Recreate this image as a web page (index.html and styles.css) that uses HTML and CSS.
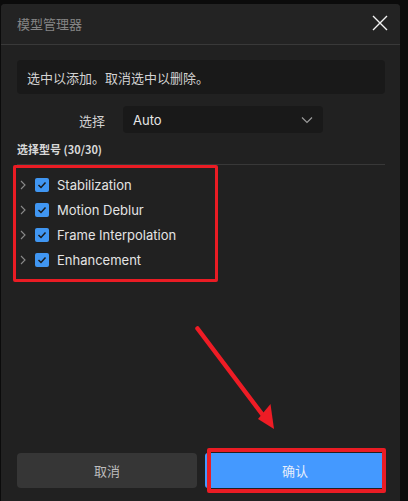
FILE: index.html
```html
<!DOCTYPE html>
<html lang="zh">
<head>
<meta charset="utf-8">
<link rel="stylesheet" href="styles.css">
</head>
<body>
<div class="dialog">
  <div class="header">
    <span class="title">模型管理器</span>
    <svg class="close" width="16" height="16" viewBox="0 0 16 16"><path d="M1 1L15 15M15 1L1 15" stroke="#f2f2f2" stroke-width="1.4" fill="none"/></svg>
  </div>
  <div class="content">
    <div class="info">选中以添加。取消选中以删除。</div>
    <div class="select-row">
      <span class="label">选择</span>
      <div class="select">
        <span>Auto</span>
        <svg width="12" height="8" viewBox="0 0 12 8"><path d="M1 1.5L6 6.5L11 1.5" stroke="#9a9a9a" stroke-width="1.2" fill="none"/></svg>
      </div>
    </div>
    <div class="section-title">选择型号 (30/30)</div>
    <div class="tree">
      <div class="row"><svg class="caret" width="6" height="10" viewBox="0 0 6 10"><path d="M1 1L5 5L1 9" stroke="#8a8a8a" stroke-width="1.1" fill="none"/></svg><span class="check"><svg width="10" height="8" viewBox="0 0 10 8"><path d="M1.5 4L4 6.5L8.5 1.5" stroke="#1a1a1a" stroke-width="1.5" fill="none"/></svg></span><span class="name">Stabilization</span></div>
      <div class="row"><svg class="caret" width="6" height="10" viewBox="0 0 6 10"><path d="M1 1L5 5L1 9" stroke="#8a8a8a" stroke-width="1.1" fill="none"/></svg><span class="check"><svg width="10" height="8" viewBox="0 0 10 8"><path d="M1.5 4L4 6.5L8.5 1.5" stroke="#1a1a1a" stroke-width="1.5" fill="none"/></svg></span><span class="name">Motion Deblur</span></div>
      <div class="row"><svg class="caret" width="6" height="10" viewBox="0 0 6 10"><path d="M1 1L5 5L1 9" stroke="#8a8a8a" stroke-width="1.1" fill="none"/></svg><span class="check"><svg width="10" height="8" viewBox="0 0 10 8"><path d="M1.5 4L4 6.5L8.5 1.5" stroke="#1a1a1a" stroke-width="1.5" fill="none"/></svg></span><span class="name">Frame Interpolation</span></div>
      <div class="row"><svg class="caret" width="6" height="10" viewBox="0 0 6 10"><path d="M1 1L5 5L1 9" stroke="#8a8a8a" stroke-width="1.1" fill="none"/></svg><span class="check"><svg width="10" height="8" viewBox="0 0 10 8"><path d="M1.5 4L4 6.5L8.5 1.5" stroke="#1a1a1a" stroke-width="1.5" fill="none"/></svg></span><span class="name">Enhancement</span></div>
    </div>
    <div class="footer">
      <button class="btn cancel">取消</button>
      <button class="btn confirm">确认</button>
    </div>
  </div>
</div>
<div class="mark mark-list"></div>
<div class="mark mark-btn"></div>
<svg class="arrow" width="100" height="110" viewBox="0 0 100 110">
  <path d="M2.5 2.5L70 92" stroke="#ee1c25" stroke-width="4.5" stroke-linecap="round" fill="none"/>
  <path d="M63 93L75.5 78L79 103Z" fill="#ee1c25"/>
</svg>
</body>
</html>
```

FILE: styles.css
```css
html, body {
  margin: 0;
  padding: 0;
  background: #0b0b0b;
  width: 408px;
  height: 501px;
  overflow: hidden;
  font-family: "Inter", "Noto Sans CJK SC", sans-serif;
}
.dialog {
  position: relative;
  margin: 4px 0 0 1px;
  width: 399px;
  height: 497px;
  background: #212121;
  border-radius: 4px 4px 0 0;
  display: flex;
  flex-direction: column;
}
.header {
  height: 41px;
  box-sizing: border-box;
  border-bottom: 1px solid #393939;
  background: #232323;
  border-radius: 4px 4px 0 0;
  display: flex;
  align-items: center;
  justify-content: space-between;
  padding: 0 12px 0 16px;
}
.title {
  font-family: "Noto Sans CJK SC", sans-serif;
  font-size: 13px;
  color: #858585;
  margin-top: -1px;
}
.close {
  margin-top: -2px;
}
.content {
  flex: 1;
  display: flex;
  flex-direction: column;
  padding: 15px 15px 13px 16px;
}
.info {
  height: 34px;
  background: #191919;
  border-radius: 4px;
  display: flex;
  align-items: center;
  padding-left: 10px;
  font-family: "Noto Sans CJK SC", sans-serif;
  font-size: 13px;
  color: #d2d2d2;
}
.select-row {
  margin-top: 12px;
  height: 27px;
  display: flex;
  align-items: center;
  gap: 18px;
}
.label {
  width: 88px;
  text-align: right;
  font-family: "Noto Sans CJK SC", sans-serif;
  font-size: 13px;
  color: #d0d0d0;
  margin-top: 1px;
}
.select {
  width: 200px;
  height: 27px;
  box-sizing: border-box;
  background: #191919;
  border-radius: 4px;
  display: flex;
  align-items: center;
  justify-content: space-between;
  padding: 1px 10px 0;
  font-size: 13px;
  color: #e6e6e6;
}
.section-title {
  margin-top: 8px;
  font-family: "Noto Sans CJK SC", sans-serif;
  font-size: 11px;
  font-weight: bold;
  color: #d8d8d8;
  height: 16px;
  line-height: 16px;
  border-bottom: 1px solid #383838;
  padding-bottom: 7px;
}
.tree {
  padding-top: 7px;
}
.row {
  height: 25px;
  display: flex;
  align-items: center;
}
.caret {
  margin-left: 3px;
  width: 6px;
}
.check {
  margin-left: 9px;
  width: 14px;
  height: 14px;
  border-radius: 2px;
  background: #4096f2;
  display: flex;
  align-items: center;
  justify-content: center;
}
.name {
  margin-left: 8px;
  font-size: 13px;
  color: #e4e4e4;
}
.footer {
  margin-top: auto;
  display: flex;
  gap: 8px;
}
.btn {
  flex: 1;
  height: 35px;
  border: 0;
  border-radius: 4px;
  font-family: "Noto Sans CJK SC", sans-serif;
  font-size: 13px;
}
.cancel {
  background: #363636;
  color: #bdbdbd;
}
.confirm {
  background: #4499ff;
  color: #e6eefc;
  border-radius: 3px;
}
.mark {
  position: absolute;
  border: 3px solid #ea1c24;
  box-sizing: border-box;
}
.mark-list {
  left: 13px;
  top: 165px;
  width: 205px;
  height: 117px;
  border-radius: 2px;
}
.mark-btn {
  left: 207px;
  top: 448px;
  width: 179px;
  height: 45px;
  border-width: 4px;
  border-radius: 2px;
}
.arrow {
  position: absolute;
  left: 195px;
  top: 326px;
}
```
